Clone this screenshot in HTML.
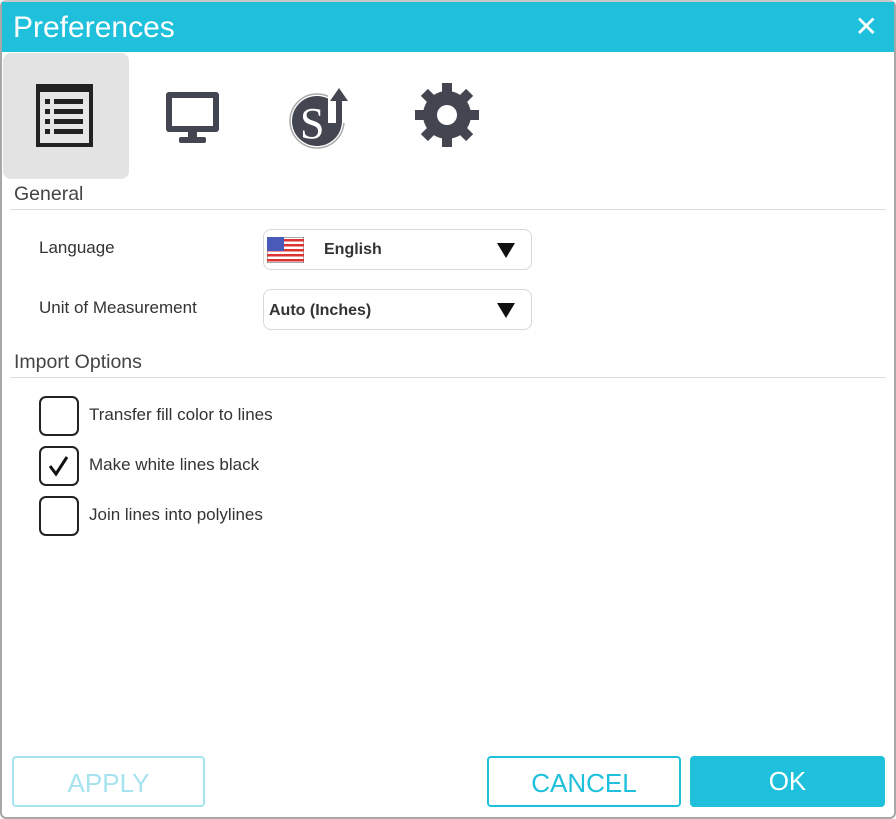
<!DOCTYPE html>
<html><head><style>
*{margin:0;padding:0;box-sizing:border-box}
body{width:896px;height:819px;background:#fff;font-family:"Liberation Sans",sans-serif;position:relative;overflow:hidden}
.frame{position:absolute;left:0;top:0;width:896px;height:819px;border:2px solid #a8a8a8;border-radius:6px;border-top-color:#c8c8c8}
.title{position:absolute;left:2px;top:2px;width:892px;height:50px;background:#1fc0dc;color:#fff;font-size:30px;padding:9px 0 0 11px}
.x{position:absolute;right:16px;top:8px;font-size:28px;color:#fff}
.a{position:absolute}
.lbl{font-size:17px;color:#333}
.hdr{font-size:19.5px;color:#444}
.line{position:absolute;left:10px;right:10px;height:1px;background:#dcdcdc}
.sel{position:absolute;left:263px;width:269px;height:41px;border:1px solid #d8d8d8;border-radius:8px;font-size:16px;font-weight:bold;color:#333}
.tri{position:absolute;right:16px;top:13px;width:0;height:0;border-left:9px solid transparent;border-right:9px solid transparent;border-top:15px solid #111}
.cb{position:absolute;left:39px;width:40px;height:40px;border:2.5px solid #222;border-radius:7px}
.btn{position:absolute;top:756px;height:51px;border-radius:4px;font-size:26px;text-align:center;line-height:51px}
</style></head><body>
<div class="frame"></div>
<div class="title">Preferences<span class="x">✕</span></div>
<div class="a" style="left:3px;top:53px;width:126px;height:126px;background:#e3e3e3;border-radius:8px"></div>
<svg class="a" style="left:0;top:53px" width="500" height="130">
<rect x="36" y="31" width="57" height="63" fill="#222"/>
<rect x="40" y="39" width="49" height="51" fill="#e6e6e6"/>
<g fill="#222"><rect x="45" y="46" width="5" height="5"/><rect x="54" y="46" width="29" height="5"/>
<rect x="45" y="56" width="5" height="5"/><rect x="54" y="56" width="29" height="5"/>
<rect x="45" y="66" width="5" height="5"/><rect x="54" y="66" width="29" height="5"/>
<rect x="45" y="76" width="5" height="5"/><rect x="54" y="76" width="29" height="5"/></g>
<rect x="166" y="39" width="53" height="40" rx="3" fill="#434650"/>
<rect x="172" y="45" width="41" height="28" fill="#fff"/>
<rect x="188" y="79" width="9" height="6" fill="#434650"/>
<rect x="179" y="84" width="27" height="6" rx="2" fill="#434650"/>
<circle cx="317" cy="68" r="27" fill="#fff" stroke="#aaa" stroke-width="1.5"/>
<circle cx="317" cy="68" r="25" fill="#434650"/>
<text x="300" y="85" font-family="Liberation Serif" font-size="44" fill="#fff">S</text>
<rect x="328" y="40" width="22" height="30" fill="#fff"/>
<path d="M336 70V48h-6l9-13 9 13h-6v22z" fill="#434650"/>
<g transform="translate(447,62)" fill="#434650">
<circle r="24"/>
<rect x="-5" y="-32" width="10" height="14"/>
<rect x="-5" y="-32" width="10" height="14" transform="rotate(45)"/>
<rect x="-5" y="-32" width="10" height="14" transform="rotate(90)"/>
<rect x="-5" y="-32" width="10" height="14" transform="rotate(135)"/>
<rect x="-5" y="-32" width="10" height="14" transform="rotate(180)"/>
<rect x="-5" y="-32" width="10" height="14" transform="rotate(225)"/>
<rect x="-5" y="-32" width="10" height="14" transform="rotate(270)"/>
<rect x="-5" y="-32" width="10" height="14" transform="rotate(315)"/>
<circle r="10" fill="#fff"/></g>
</svg>
<div class="a hdr" style="left:14px;top:183px">General</div>
<div class="line" style="top:209px"></div>
<div class="a lbl" style="left:39px;top:238px">Language</div>
<div class="a lbl" style="left:39px;top:298px">Unit of Measurement</div>
<div class="sel" style="top:229px">
<svg class="a" style="left:3px;top:7px" width="37" height="26"><rect width="37" height="26" fill="#fff" stroke="#555"/><g fill="#d33"><rect y="2" width="37" height="2.5"/><rect y="7" width="37" height="2.5"/><rect y="12" width="37" height="2.5"/><rect y="17" width="37" height="2.5"/><rect y="22" width="37" height="2.5"/></g><rect width="17" height="14" fill="#4a5ab8"/></svg>
<span class="a" style="left:60px;top:11px">English</span><div class="tri"></div></div>
<div class="sel" style="top:289px"><span class="a" style="left:5px;top:12px">Auto (Inches)</span><div class="tri"></div></div>
<div class="a hdr" style="left:14px;top:351px">Import Options</div>
<div class="line" style="top:377px"></div>
<div class="cb" style="top:396px"></div><div class="a lbl" style="left:89px;top:405px">Transfer fill color to lines</div>
<div class="cb" style="top:446px"><svg width="36" height="36"><path d="M9 18l6 8 11-17" stroke="#111" stroke-width="3" fill="none"/></svg></div><div class="a lbl" style="left:89px;top:455px">Make white lines black</div>
<div class="cb" style="top:496px"></div><div class="a lbl" style="left:89px;top:505px">Join lines into polylines</div>
<div class="btn" style="left:12px;width:193px;border:2.5px solid #a6e3ef;color:#a6e3ef">APPLY</div>
<div class="btn" style="left:487px;width:194px;border:2.5px solid #1fc0dc;color:#1fc0dc">CANCEL</div>
<div class="btn" style="left:690px;width:195px;background:#1fc0dc;color:#fff">OK</div>
</body></html>
